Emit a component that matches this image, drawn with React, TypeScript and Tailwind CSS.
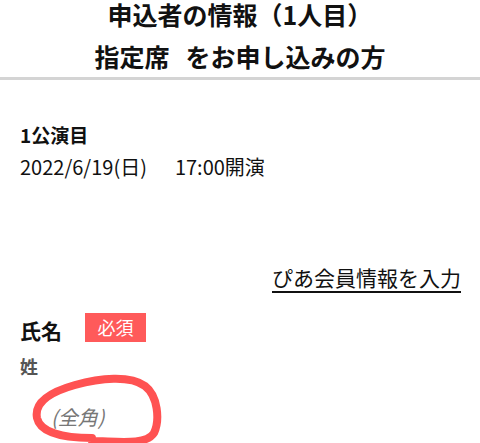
const jp = { fontFamily: '"Noto Sans CJK JP", "Noto Sans", sans-serif' }

export default function App() {
  return (
    <div className="relative w-[480px] h-[443px] overflow-hidden bg-white text-[#111]" style={jp}>
      <header className="border-b-[3px] border-[#d4d4d4] pb-[7px]">
        <h1 className="text-center font-bold text-[25px] leading-[28px]">
          申込者の情報（1人目）
        </h1>
        <h2 className="text-center font-bold text-[25px] leading-[28px] mt-[14px]">
          指定席<span className="inline-block w-[16px]" />をお申し込みの方
        </h2>
      </header>

      <section className="px-[20px] pt-[42px]">
        <div className="font-bold text-[19px] leading-[26px]">1公演目</div>
        <div className="flex text-[20px] leading-[26px] mt-[6px]">
          <span>2022/6/19(日)</span>
          <span className="w-[28px]" />
          <span>17:00開演</span>
        </div>
      </section>

      <div className="px-[19px] mt-[83px] flex justify-end">
        <a href="#" className="text-[21px] leading-[28px] underline underline-offset-[5px] decoration-[1.5px]">
          ぴあ会員情報を入力
        </a>
      </div>

      <section className="px-[20px] mt-[22px]">
        <div className="flex items-start gap-[23px] h-[29px]">
          <span className="font-bold text-[21px] leading-[29px] pt-[3px]">氏名</span>
          <span className="bg-[#ff5a5a] text-white text-[18px] leading-[29px] w-[61px] text-center">必須</span>
        </div>
        <div className="font-bold text-[18px] leading-[24px] text-[#555] mt-[12px]">姓</div>
        <input
          type="text"
          placeholder="(全角)"
          className="block w-[200px] mt-[25px] bg-transparent outline-none text-[20px] leading-[28px] italic pl-[31px] placeholder:text-[#777]"
          style={jp}
        />
      </section>

      <svg className="absolute left-0 top-0 pointer-events-none" width="480" height="443" viewBox="0 0 480 443">
        <path
          d="M92 438 C62 438 40 432 37 418 C34 402 50 392 75 385 C100 378 130 375 145 386 C158 396 160 420 154 433 C146 446 115 441 92 441"
          fill="none"
          stroke="#ff5252"
          strokeWidth="8"
          strokeLinecap="round"
        />
      </svg>
    </div>
  )
}
